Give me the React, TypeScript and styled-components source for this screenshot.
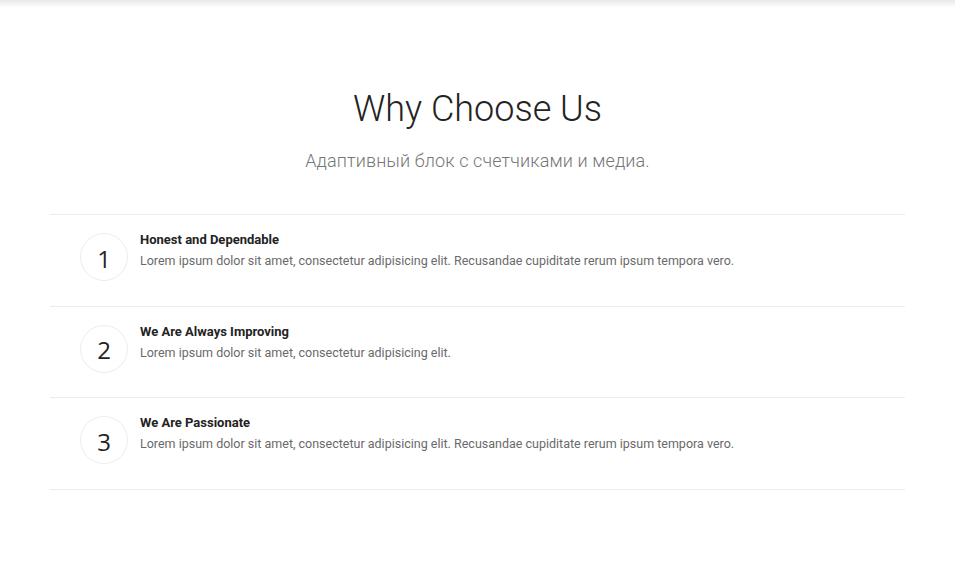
import React from "react";
import styled, { createGlobalStyle } from "styled-components";

const Global = createGlobalStyle`
  html, body { margin: 0; padding: 0; background: #fff; }
  body { font-family: Roboto, "Open Sans", sans-serif; color: #232323; }
  * { box-sizing: border-box; }
`;

const Page = styled.div`
  min-height: 579px;
  display: flex;
  flex-direction: column;
`;

const TopShade = styled.div`
  height: 8px;
  background: linear-gradient(rgba(0, 0, 0, 0.09), rgba(0, 0, 0, 0));
`;

const Section = styled.section`
  width: 100%;
  padding: 80px 50px 0;
  display: flex;
  flex-direction: column;
  align-items: center;
`;

const Title = styled.h2`
  margin: 0;
  font-size: 36px;
  font-weight: 300;
  line-height: 42px;
  color: #232323;
`;

const Subtitle = styled.p`
  margin: 19px 0 0;
  font-size: 18px;
  font-weight: 300;
  letter-spacing: 0.12px;
  line-height: 24px;
  color: #767676;
`;

const List = styled.div`
  margin-top: 41px;
  width: 100%;
  border-top: 1px solid #ececec;
`;

const Row = styled.div`
  display: flex;
  align-items: flex-start;
  gap: 12px;
  padding: 18px 0 24.5px 30px;
  border-bottom: 1px solid #ececec;
`;

const Badge = styled.div`
  flex: none;
  width: 48px;
  height: 48px;
  border-radius: 50%;
  border: 1px solid #ececec;
  display: flex;
  align-items: center;
  justify-content: center;
  font-family: "Open Sans", sans-serif;
  font-size: 24px;
  font-weight: 400;
  color: #232323;
  padding-top: 2px;
`;

const Body = styled.div`
  display: flex;
  flex-direction: column;
  margin-top: -2px;
`;

const ItemTitle = styled.h4`
  margin: 0;
  font-size: 13px;
  font-weight: 700;
  line-height: 18px;
  color: #232323;
`;

const ItemText = styled.p`
  margin: 3px 0 0;
  font-size: 12.5px;
  font-weight: 400;
  line-height: 18px;
  color: #6a6a6a;
`;

const items = [
  {
    n: 1,
    title: "Honest and Dependable",
    text: "Lorem ipsum dolor sit amet, consectetur adipisicing elit. Recusandae cupiditate rerum ipsum tempora vero.",
  },
  {
    n: 2,
    title: "We Are Always Improving",
    text: "Lorem ipsum dolor sit amet, consectetur adipisicing elit.",
  },
  {
    n: 3,
    title: "We Are Passionate",
    text: "Lorem ipsum dolor sit amet, consectetur adipisicing elit. Recusandae cupiditate rerum ipsum tempora vero.",
  },
];

export default function App() {
  return (
    <Page>
      <Global />
      <TopShade />
      <Section>
        <Title>Why Choose Us</Title>
        <Subtitle>Адаптивный блок с счетчиками и медиа.</Subtitle>
        <List>
          {items.map((it) => (
            <Row key={it.n}>
              <Badge>{it.n}</Badge>
              <Body>
                <ItemTitle>{it.title}</ItemTitle>
                <ItemText>{it.text}</ItemText>
              </Body>
            </Row>
          ))}
        </List>
      </Section>
    </Page>
  );
}
